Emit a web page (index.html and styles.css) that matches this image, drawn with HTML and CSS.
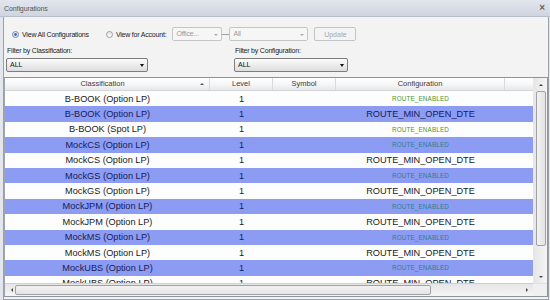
FILE: index.html
```html
<!DOCTYPE html>
<html lang="en">
<head>
    <meta charset="UTF-8">
    <title>Configurations</title>
    <link rel="stylesheet" href="styles.css">
</head>
<body>
    <div class="window">
        <div class="titlebar">
            <span class="title">Configurations</span>
            <span class="close">&times;</span>
        </div>

        <div class="panel">
            <div class="account-row">
                <label class="radio checked"><span class="dot"></span>View All Configurations</label>
                <label class="radio"><span class="dot"></span>View for Account:</label>
                <div class="combo disabled office">Office...<span class="arrow"></span></div>
                <span class="dash"></span>
                <div class="combo disabled all-accounts">All<span class="arrow"></span></div>
                <button class="update" disabled>Update</button>
            </div>

            <div class="filters">
                <div class="filter classification">
                    <div class="filter-label">Filter by Classification:</div>
                    <div class="combo">ALL<span class="arrow"></span></div>
                </div>
                <div class="filter configuration">
                    <div class="filter-label">Filter by Configuration:</div>
                    <div class="combo">ALL<span class="arrow"></span></div>
                </div>
            </div>

            <div class="grid">
                <div class="grid-head">
                    <div class="hcell sorted">Classification<span class="sort"></span></div>
                    <div class="hcell">Level</div>
                    <div class="hcell">Symbol</div>
                    <div class="hcell">Configuration</div>
                    <div class="hcell filler"></div>
                </div>

                <div class="vscroll">
                    <span class="btn"><span class="tri up"></span></span>
                    <span class="thumb"></span>
                    <span class="track"></span>
                    <span class="btn"><span class="tri down"></span></span>
                </div>

                <div class="grid-body">
                    <div class="row"><span>B-BOOK (Option LP)</span><span>1</span><span></span><span class="enabled">ROUTE_ENABLED</span></div>
                    <div class="row alt"><span>B-BOOK (Option LP)</span><span>1</span><span></span><span>ROUTE_MIN_OPEN_DTE</span></div>
                    <div class="row"><span>B-BOOK (Spot LP)</span><span>1</span><span></span><span class="enabled">ROUTE_ENABLED</span></div>
                    <div class="row alt"><span>MockCS (Option LP)</span><span>1</span><span></span><span class="enabled">ROUTE_ENABLED</span></div>
                    <div class="row"><span>MockCS (Option LP)</span><span>1</span><span></span><span>ROUTE_MIN_OPEN_DTE</span></div>
                    <div class="row alt"><span>MockGS (Option LP)</span><span>1</span><span></span><span class="enabled">ROUTE_ENABLED</span></div>
                    <div class="row"><span>MockGS (Option LP)</span><span>1</span><span></span><span>ROUTE_MIN_OPEN_DTE</span></div>
                    <div class="row alt"><span>MockJPM (Option LP)</span><span>1</span><span></span><span class="enabled">ROUTE_ENABLED</span></div>
                    <div class="row"><span>MockJPM (Option LP)</span><span>1</span><span></span><span>ROUTE_MIN_OPEN_DTE</span></div>
                    <div class="row alt"><span>MockMS (Option LP)</span><span>1</span><span></span><span class="enabled">ROUTE_ENABLED</span></div>
                    <div class="row"><span>MockMS (Option LP)</span><span>1</span><span></span><span>ROUTE_MIN_OPEN_DTE</span></div>
                    <div class="row alt"><span>MockUBS (Option LP)</span><span>1</span><span></span><span class="enabled">ROUTE_ENABLED</span></div>
                    <div class="row"><span>MockUBS (Option LP)</span><span>1</span><span></span><span>ROUTE_MIN_OPEN_DTE</span></div>
                </div>

                <div class="hscroll">
                    <span class="btn"><span class="tri left"></span></span>
                    <span class="thumb"></span>
                    <span class="track"></span>
                    <span class="btn"><span class="tri right"></span></span>
                </div>
                <div class="corner"></div>
            </div>
        </div>
    </div>
</body>
</html>
```

FILE: styles.css
```css
body {
    margin: 0;
    background-color: #e3e6ed;
    font-family: "Liberation Sans", Arial, sans-serif;
    color: #222;
    overflow: hidden;
}

.window {
    width: 550px;
    height: 300px;
}

.titlebar {
    height: 16px;
    display: flex;
    align-items: center;
    justify-content: space-between;
    padding: 0 5px 0 4px;
    background: linear-gradient(#e2e6ee, #cfd5e0);
    border-bottom: 1px solid #b9c0cc;
}

.title {
    font-size: 7px;
    letter-spacing: -0.1px;
    color: #555;
}

.close {
    font-size: 10px;
    font-weight: bold;
    color: #666;
    line-height: 1;
}

.panel {
    margin: 0 1px 0 3px;
    height: 283px;
    border: 1px solid #9aa0aa;
    border-top: none;
    background-color: #f3f3f3;
    padding-top: 10px;
    box-sizing: border-box;
}

/* account row */
.account-row {
    display: flex;
    align-items: center;
    height: 14px;
    font-size: 7px;
    letter-spacing: -0.2px;
    color: #222;
}

.radio {
    display: flex;
    align-items: center;
    gap: 3px;
}

.radio:first-child { margin-left: 8px; margin-right: 17px; }
.radio:nth-child(2) { margin-right: 6px; }

.dot {
    width: 7px;
    height: 7px;
    border-radius: 50%;
    border: 1px solid #9a9ea4;
    background: linear-gradient(#e6e6e6, #fafafa);
    box-sizing: border-box;
}

.radio.checked .dot {
    border-color: #7a8aa8;
    background: radial-gradient(circle, #2d62b8 0, #4b84d4 35%, #dfe8f5 45%, #f4f4f4 100%);
}

.combo {
    position: relative;
    height: 14px;
    box-sizing: border-box;
    border: 1px solid #7d7d7d;
    border-radius: 2px;
    background: linear-gradient(#fdfdfd, #ececec 50%, #dedede);
    font-size: 7px;
    line-height: 12px;
    padding-left: 3px;
    color: #111;
}

.combo.disabled {
    border-color: #c6c6c6;
    background: #f6f6f6;
    color: #9a9a9a;
}

.combo .arrow {
    position: absolute;
    right: 3px;
    top: 5px;
    border-left: 2.5px solid transparent;
    border-right: 2.5px solid transparent;
    border-top: 3px solid #111;
}

.combo.disabled .arrow { border-top-color: #a8a8a8; border-left-width: 2px; border-right-width: 2px; border-top-width: 2px; top: 6px; }

.office { width: 50px; }

.dash {
    width: 7px;
    height: 1px;
    background-color: #a0a0a0;
}

.all-accounts { width: 79px; }

.update {
    margin-left: 6px;
    width: 42px;
    height: 14px;
    padding: 0;
    border: 1px solid #c4c4c4;
    border-radius: 2px;
    background-color: #f4f4f4;
    font-family: inherit;
    font-size: 7px;
    color: #a8a8a8;
}

/* filters */
.filters {
    display: flex;
    gap: 86px;
    margin-top: 5px;
    padding-left: 2px;
}

.filter-label {
    font-size: 7px;
    letter-spacing: -0.2px;
    line-height: 10px;
    margin-left: 1px;
    margin-bottom: 2px;
}

.classification { width: 142px; }
.configuration { width: 114px; }

/* grid */
.grid {
    display: grid;
    grid-template-columns: 1fr 14px;
    grid-template-rows: 13px 192px 13px;
    margin: 5px 0 0 0;
    width: 544px;
    box-sizing: border-box;
    border: 1px solid #8e939c;
    border-left-color: #a0a4ac;
    background-color: #fff;
}

.grid-head, .row {
    display: grid;
    grid-template-columns: 205px 63px 63px 169px 1fr;
}

.grid-head {
    background: linear-gradient(#ffffff, #f6f7f8 50%, #e6e8ea);
    border-bottom: 1px solid #d3d5d8;
    box-sizing: border-box;
}

.hcell {
    position: relative;
    border-right: 1px solid #d8dadd;
    font-size: 7.5px;
    line-height: 12px;
    text-align: center;
    color: #3a3a3a;
}

.hcell.sorted { padding-right: 9px; }
.hcell.filler { border-right: none; }

.sort {
    position: absolute;
    right: 5px;
    top: 5px;
    border-left: 2px solid transparent;
    border-right: 2px solid transparent;
    border-bottom: 2px solid #555;
}

.grid-body {
    overflow: hidden;
}

.row {
    height: 15.4px;
    align-items: center;
    background-color: #fdfdfd;
    font-size: 9.2px;
    text-align: center;
    color: #1a1a1a;
}

.row.alt {
    background-color: #8c9cf3;
    color: #181b55;
}

.row .enabled {
    font-size: 6.3px;
    letter-spacing: 0.15px;
    color: #3d9a3a;
}

.row.alt .enabled { color: #2b7f96; }

/* scrollbars */
.vscroll {
    grid-row: 1 / 3;
    grid-column: 2;
    display: flex;
    flex-direction: column;
    align-items: center;
    background: linear-gradient(to right, #e6e6e6, #f5f5f5);
    border-left: 1px solid #e8e8e8;
}

.hscroll {
    display: flex;
    align-items: center;
    background: linear-gradient(#e6e6e6, #f5f5f5);
    border-top: 1px solid #d0d0d0;
}

.btn {
    flex: none;
    width: 13px;
    height: 13px;
    display: flex;
    align-items: center;
    justify-content: center;
}

.track { flex: 1; }

.vscroll .thumb {
    width: 10px;
    height: 155px;
    margin-left: 1px;
    box-sizing: border-box;
    border: 1px solid #9ea1a6;
    border-radius: 2px;
    background: linear-gradient(to right, #f2f2f2, #e3e3e3);
}

.hscroll .thumb {
    width: 416px;
    height: 10px;
    margin-left: -3px;
    box-sizing: border-box;
    border: 1px solid #9ea1a6;
    border-radius: 2px;
    background: linear-gradient(#f2f2f2, #e3e3e3);
}

.tri { width: 0; height: 0; }
.tri.up { border-left: 2px solid transparent; border-right: 2px solid transparent; border-bottom: 2px solid #444; }
.tri.down { border-left: 2px solid transparent; border-right: 2px solid transparent; border-top: 2px solid #444; }
.tri.left { border-top: 2px solid transparent; border-bottom: 2px solid transparent; border-right: 2px solid #444; }
.tri.right { border-top: 2px solid transparent; border-bottom: 2px solid transparent; border-left: 2px solid #444; }

.corner {
    background-color: #f0f0f0;
    border-top: 1px solid #e0e0e0;
}
```
